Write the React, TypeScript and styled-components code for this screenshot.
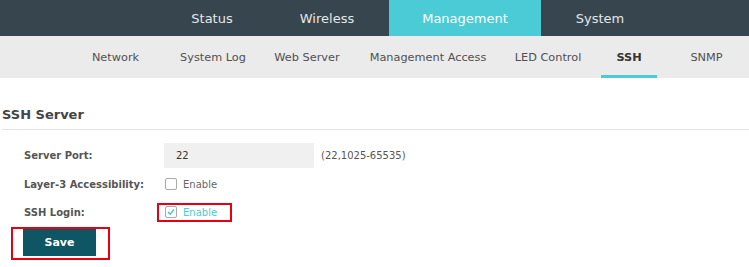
import React from 'react';
import styled, { createGlobalStyle } from 'styled-components';

const Global = createGlobalStyle`
  html, body { margin: 0; padding: 0; background: #ffffff; }
  body { font-family: "DejaVu Sans", Verdana, sans-serif; }
`;

const Page = styled.div`
  width: 749px;
  height: 267px;
  overflow: hidden;
  display: flex;
  flex-direction: column;
`;

const TopBar = styled.nav`
  height: 36px;
  background: #36454e;
  display: flex;
  padding-left: 159px;
`;

const TopTab = styled.div<{ $w: number; $active?: boolean }>`
  width: ${p => p.$w}px;
  flex-shrink: 0;
  display: flex;
  align-items: center;
  justify-content: center;
  font-size: 13px;
  color: ${p => (p.$active ? '#ffffff' : '#e4e7e8')};
  background: ${p => (p.$active ? '#4acbd6' : 'transparent')};
`;

const SubNav = styled.nav`
  height: 42px;
  background: #ebebeb;
  display: flex;
  padding-left: 58px;
  overflow: hidden;
`;

const SubItem = styled.div<{ $w: number; $active?: boolean }>`
  width: ${p => p.$w}px;
  flex-shrink: 0;
  display: flex;
  align-items: center;
  justify-content: center;
  font-size: 11.3px;
  color: ${p => (p.$active ? '#333' : '#505050')};
  font-weight: ${p => (p.$active ? 'bold' : 'normal')};
  box-sizing: border-box;
  border-bottom: 3px solid ${p => (p.$active ? '#4acbd6' : 'transparent')};
  padding-top: 3px;
`;

const Content = styled.main`
  padding-left: 2px;
  display: flex;
  flex-direction: column;
`;

const Heading = styled.h2`
  margin: 29px 0 0 0;
  padding: 0 0 6px 0;
  font-size: 13px;
  line-height: 16px;
  font-weight: bold;
  color: #444;
  border-bottom: 1px solid #e2e2e2;
`;

const Form = styled.div`
  margin-top: 13px;
  padding-left: 22px;
  display: flex;
  flex-direction: column;
  gap: 4px;
`;

const Row = styled.div<{ $h: number }>`
  height: ${p => p.$h}px;
  display: grid;
  grid-template-columns: 140px auto;
  align-items: center;
`;

const Label = styled.div`
  font-size: 10px;
  font-weight: bold;
  color: #555;
`;

const Field = styled.div`
  display: flex;
  align-items: center;
  gap: 7px;
`;

const TextInput = styled.div`
  width: 150px;
  height: 25px;
  box-sizing: border-box;
  background: #f0f0f0;
  padding-left: 12px;
  display: flex;
  align-items: center;
  font-size: 10px;
  color: #333;
`;

const Hint = styled.span`
  font-size: 10px;
  color: #555;
`;

const Option = styled.label<{ $highlight?: boolean }>`
  position: relative;
  height: 16px;
  display: flex;
  align-items: center;
  gap: 6px;
  padding-left: 1px;
  &::after {
    content: '';
    display: ${p => (p.$highlight ? 'block' : 'none')};
    position: absolute;
    left: -7px;
    top: -1px;
    width: 75px;
    height: 19px;
    box-sizing: border-box;
    border: 2px solid #e60012;
  }
`;

const Box = styled.span`
  width: 12px;
  height: 12px;
  box-sizing: border-box;
  border: 1px solid #a9a9a9;
  border-radius: 2px;
  background: #fff;
  display: flex;
  align-items: center;
  justify-content: center;
`;

const OptionText = styled.span<{ $checked?: boolean }>`
  font-size: 10px;
  color: ${p => (p.$checked ? '#4acbd6' : '#666')};
`;

const SaveFrame = styled.div`
  align-self: flex-start;
  margin: 3px 0 0 9px;
  padding: 0 12px 2px 10px;
  border: 2px solid #e60012;
`;

const SaveButton = styled.button`
  width: 73px;
  height: 27px;
  border: none;
  background: #0e5663;
  color: #fff;
  font-family: "DejaVu Sans", Verdana, sans-serif;
  font-size: 11px;
  font-weight: bold;
  display: block;
  padding: 0;
`;

const Check = ({ checked }: { checked?: boolean }) => (
  <Box>
    {checked && (
      <svg width="8" height="8" viewBox="0 0 8 8">
        <polyline points="1,4.2 3.2,6.2 7,1.6" fill="none" stroke="#4acbd6" strokeWidth="1.6" />
      </svg>
    )}
  </Box>
);

const topTabs = [
  { t: 'Status', w: 106 },
  { t: 'Wireless', w: 124 },
  { t: 'Management', w: 152, active: true },
  { t: 'System', w: 118 },
];

const subItems = [
  { t: 'Network', w: 115 },
  { t: 'System Log', w: 80 },
  { t: 'Web Server', w: 108 },
  { t: 'Management Access', w: 134 },
  { t: 'LED Control', w: 106 },
  { t: 'SSH', w: 56, active: true },
  { t: 'SNMP', w: 99 },
];

export default function App() {
  return (
    <Page>
      <Global />
      <TopBar>
        {topTabs.map(x => (
          <TopTab key={x.t} $w={x.w} $active={x.active}>{x.t}</TopTab>
        ))}
      </TopBar>
      <SubNav>
        {subItems.map(x => (
          <SubItem key={x.t} $w={x.w} $active={x.active}>{x.t}</SubItem>
        ))}
      </SubNav>
      <Content>
        <Heading>SSH Server</Heading>
        <Form>
          <Row $h={25}>
            <Label>Server Port:</Label>
            <Field>
              <TextInput>22</TextInput>
              <Hint>(22,1025-65535)</Hint>
            </Field>
          </Row>
          <Row $h={24}>
            <Label>Layer-3 Accessibility:</Label>
            <Field>
              <Option>
                <Check />
                <OptionText>Enable</OptionText>
              </Option>
            </Field>
          </Row>
          <Row $h={24}>
            <Label>SSH Login:</Label>
            <Field>
              <Option $highlight>
                <Check checked />
                <OptionText $checked>Enable</OptionText>
              </Option>
            </Field>
          </Row>
        </Form>
        <SaveFrame>
          <SaveButton>Save</SaveButton>
        </SaveFrame>
      </Content>
    </Page>
  );
}
